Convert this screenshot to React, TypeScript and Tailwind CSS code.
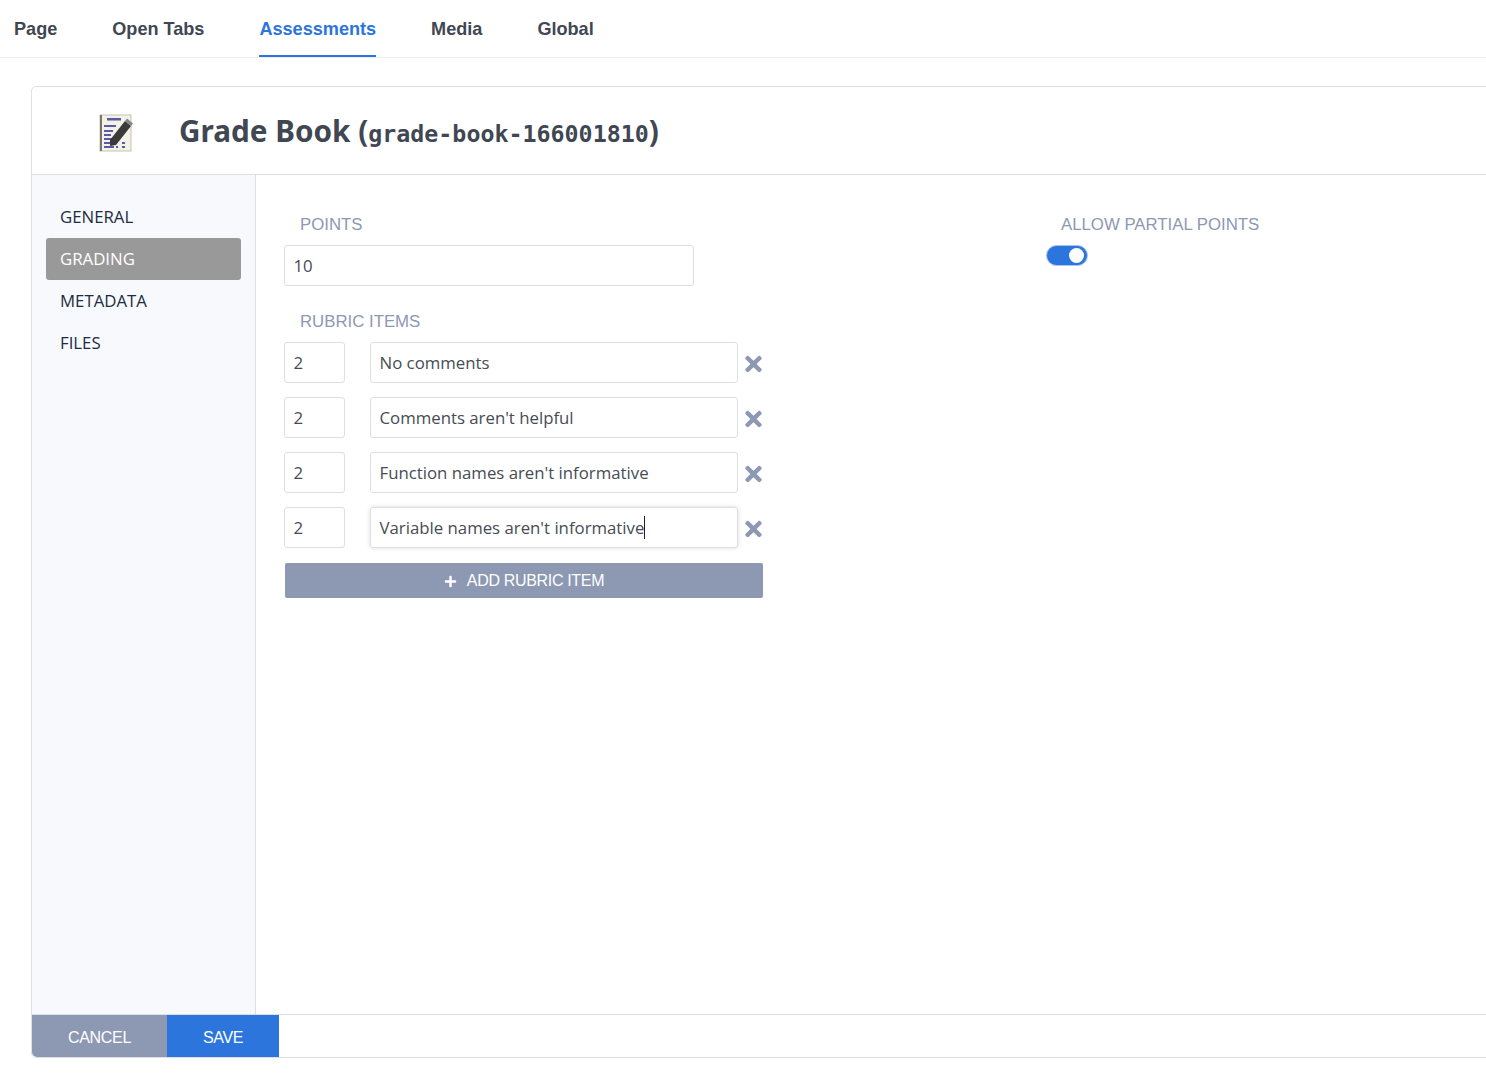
import React from 'react';
import { FaPlus, FaTimes } from 'react-icons/fa';

const tabs = ['Page', 'Open Tabs', 'Assessments', 'Media', 'Global'];
const sideItems = ['GENERAL', 'GRADING', 'METADATA', 'FILES'];
const rubricItems = [
  'No comments',
  "Comments aren't helpful",
  "Function names aren't informative",
  "Variable names aren't informative",
];

function GradeIcon() {
  return (
    <svg width="36" height="40" viewBox="0 0 36 40">
      <rect x="2" y="2" width="31" height="36" fill="#f4f1e6" stroke="#c4c1b4" />
      <rect x="2" y="2" width="2" height="36" fill="#77756c" />
      <rect x="9" y="5" width="14" height="2.5" fill="#5a5aa8" />
      <rect x="6" y="12" width="12" height="2" fill="#5a5aa8" />
      <rect x="6" y="17" width="9" height="2" fill="#5a5aa8" />
      <rect x="6" y="21" width="7" height="2" fill="#5a5aa8" />
      <rect x="6" y="25" width="9" height="2" fill="#5a5aa8" />
      <rect x="6" y="29" width="8" height="2" fill="#5a5aa8" />
      <rect x="6" y="33" width="10" height="2" fill="#5a5aa8" />
      <rect x="24" y="29" width="3" height="2" fill="#5a5aa8" />
      <rect x="18" y="33" width="2" height="2" fill="#5a5aa8" />
      <rect x="24" y="33" width="3" height="2" fill="#5a5aa8" />
      <path d="M12 27 L27 8 L33 13 L18 32 L12 33 Z" fill="#3a3a3c" />
      <path d="M27 8 L29 5.5 L35 10.5 L33 13 Z" fill="#85858a" />
    </svg>
  );
}

export default function App() {
  return (
    <div className="h-screen overflow-hidden bg-white font-['Open_Sans',sans-serif]">
      <div className="flex h-[58px] gap-[55px] border-b border-[#ebedf0] pl-[14px] font-['Liberation_Sans',sans-serif] text-[18.1px] font-bold text-[#3f4753]">
        {tabs.map((tab) => (
          <div
            key={tab}
            className={
              tab === 'Assessments'
                ? 'h-[57px] border-b-2 border-[#2b75dd] pt-[16px] leading-[26px] text-[#2b75dd]'
                : 'pt-[16px] leading-[26px]'
            }
          >
            {tab}
          </div>
        ))}
      </div>

      <div className="ml-[31px] mt-[28px] flex h-[972px] w-[1480px] flex-col rounded-tl-[5px] rounded-bl-[5px] border border-[#dcdfe4]">
        <div className="flex h-[88px] shrink-0 items-center border-b border-[#dcdfe4]">
          <div className="ml-[66px] mt-[4px]">
            <GradeIcon />
          </div>
          <h1 className="ml-[45px] pt-[2px] font-['Noto_Sans',sans-serif] text-[29.7px] font-bold text-[#3f4753]">
            Grade Book{' '}
            <span>
              (<span className="font-['DejaVu_Sans_Mono',monospace] text-[23.3px]">grade-book-166001810</span>)
            </span>
          </h1>
        </div>

        <div className="flex min-h-0 flex-1">
          <div className="w-[224px] shrink-0 border-r border-[#dcdfe4] bg-[#f7f9fd] px-[14px] pt-[21px]">
            {sideItems.map((item) => (
              <div
                key={item}
                className={
                  item === 'GRADING'
                    ? 'flex h-[42px] items-center rounded-[3px] bg-[#999999] pl-[14px] text-[16.8px] text-white'
                    : 'flex h-[42px] items-center pl-[14px] text-[16.8px] text-[#1c2b40]'
                }
              >
                {item}
              </div>
            ))}
          </div>

          <div className="flex flex-1 pl-[28px] pt-[38px]">
            <div className="w-[479px]">
              <div className="pl-[16px] font-['Liberation_Sans',sans-serif] text-[16.8px] leading-[24px] text-[#8d98b3]">
                POINTS
              </div>
              <div className="mt-[8px] flex h-[41px] w-[410px] items-center rounded-[3px] border border-[#dcdfe4] pl-[8.5px] text-[16.8px] text-[#464c54]">
                10
              </div>
              <div className="mt-[24px] pl-[16px] font-['Liberation_Sans',sans-serif] text-[16.8px] leading-[24px] text-[#8d98b3]">
                RUBRIC ITEMS
              </div>
              <div className="mt-[8px] flex flex-col gap-[14px]">
                {rubricItems.map((item, i) => (
                  <div key={item} className="flex items-center">
                    <div className="flex h-[41px] w-[61px] shrink-0 items-center rounded-[3px] border border-[#dcdfe4] pl-[8.5px] text-[16.8px] text-[#464c54]">
                      2
                    </div>
                    <div
                      className={
                        i === 3
                          ? 'ml-[25px] flex h-[41px] w-[368px] shrink-0 items-center rounded-[3px] border border-[#dcdfe4] pl-[8.5px] text-[16.8px] text-[#464c54] shadow-[0_0_4px_rgba(0,0,0,0.15)]'
                          : 'ml-[25px] flex h-[41px] w-[368px] shrink-0 items-center rounded-[3px] border border-[#dcdfe4] pl-[8.5px] text-[16.8px] text-[#464c54]'
                      }
                    >
                      {item}
                      {i === 3 && <span className="h-[23px] w-px bg-[#222222]" />}
                    </div>
                    <FaTimes className="ml-[6px] mt-[2px] h-[24px] w-[19px] shrink-0 text-[#8d98b3]" />
                  </div>
                ))}
              </div>
              <div className="ml-px mt-[15px] flex h-[35px] w-[478px] items-center justify-center gap-[10px] rounded-[2px] bg-[#8d98b3] font-['Liberation_Sans',sans-serif] text-base tracking-[-0.33px] text-white">
                <FaPlus className="mt-[1px] h-[13px] w-[13px]" />
                ADD RUBRIC ITEM
              </div>
            </div>

            <div className="ml-[283px]">
              <div className="pl-[15px] font-['Liberation_Sans',sans-serif] text-[16.8px] leading-[24px] text-[#8d98b3]">
                ALLOW PARTIAL POINTS
              </div>
              <div className="mt-[8px] flex h-[21px] w-[42px] items-center justify-end rounded-full border border-[#a9c6f0] bg-[#2b75dd] pr-[3px]">
                <div className="h-[15px] w-[15px] rounded-full bg-white" />
              </div>
            </div>
          </div>
        </div>

        <div className="flex h-[43px] shrink-0 border-t border-[#dcdfe4] font-['Liberation_Sans',sans-serif] text-base tracking-[-0.33px] text-white">
          <div className="flex w-[135px] items-center justify-center rounded-bl-[5px] bg-[#8d98b3] pt-[3px]">CANCEL</div>
          <div className="flex w-[112px] items-center justify-center bg-[#2b75dd] pt-[3px]">SAVE</div>
        </div>
      </div>
    </div>
  );
}
